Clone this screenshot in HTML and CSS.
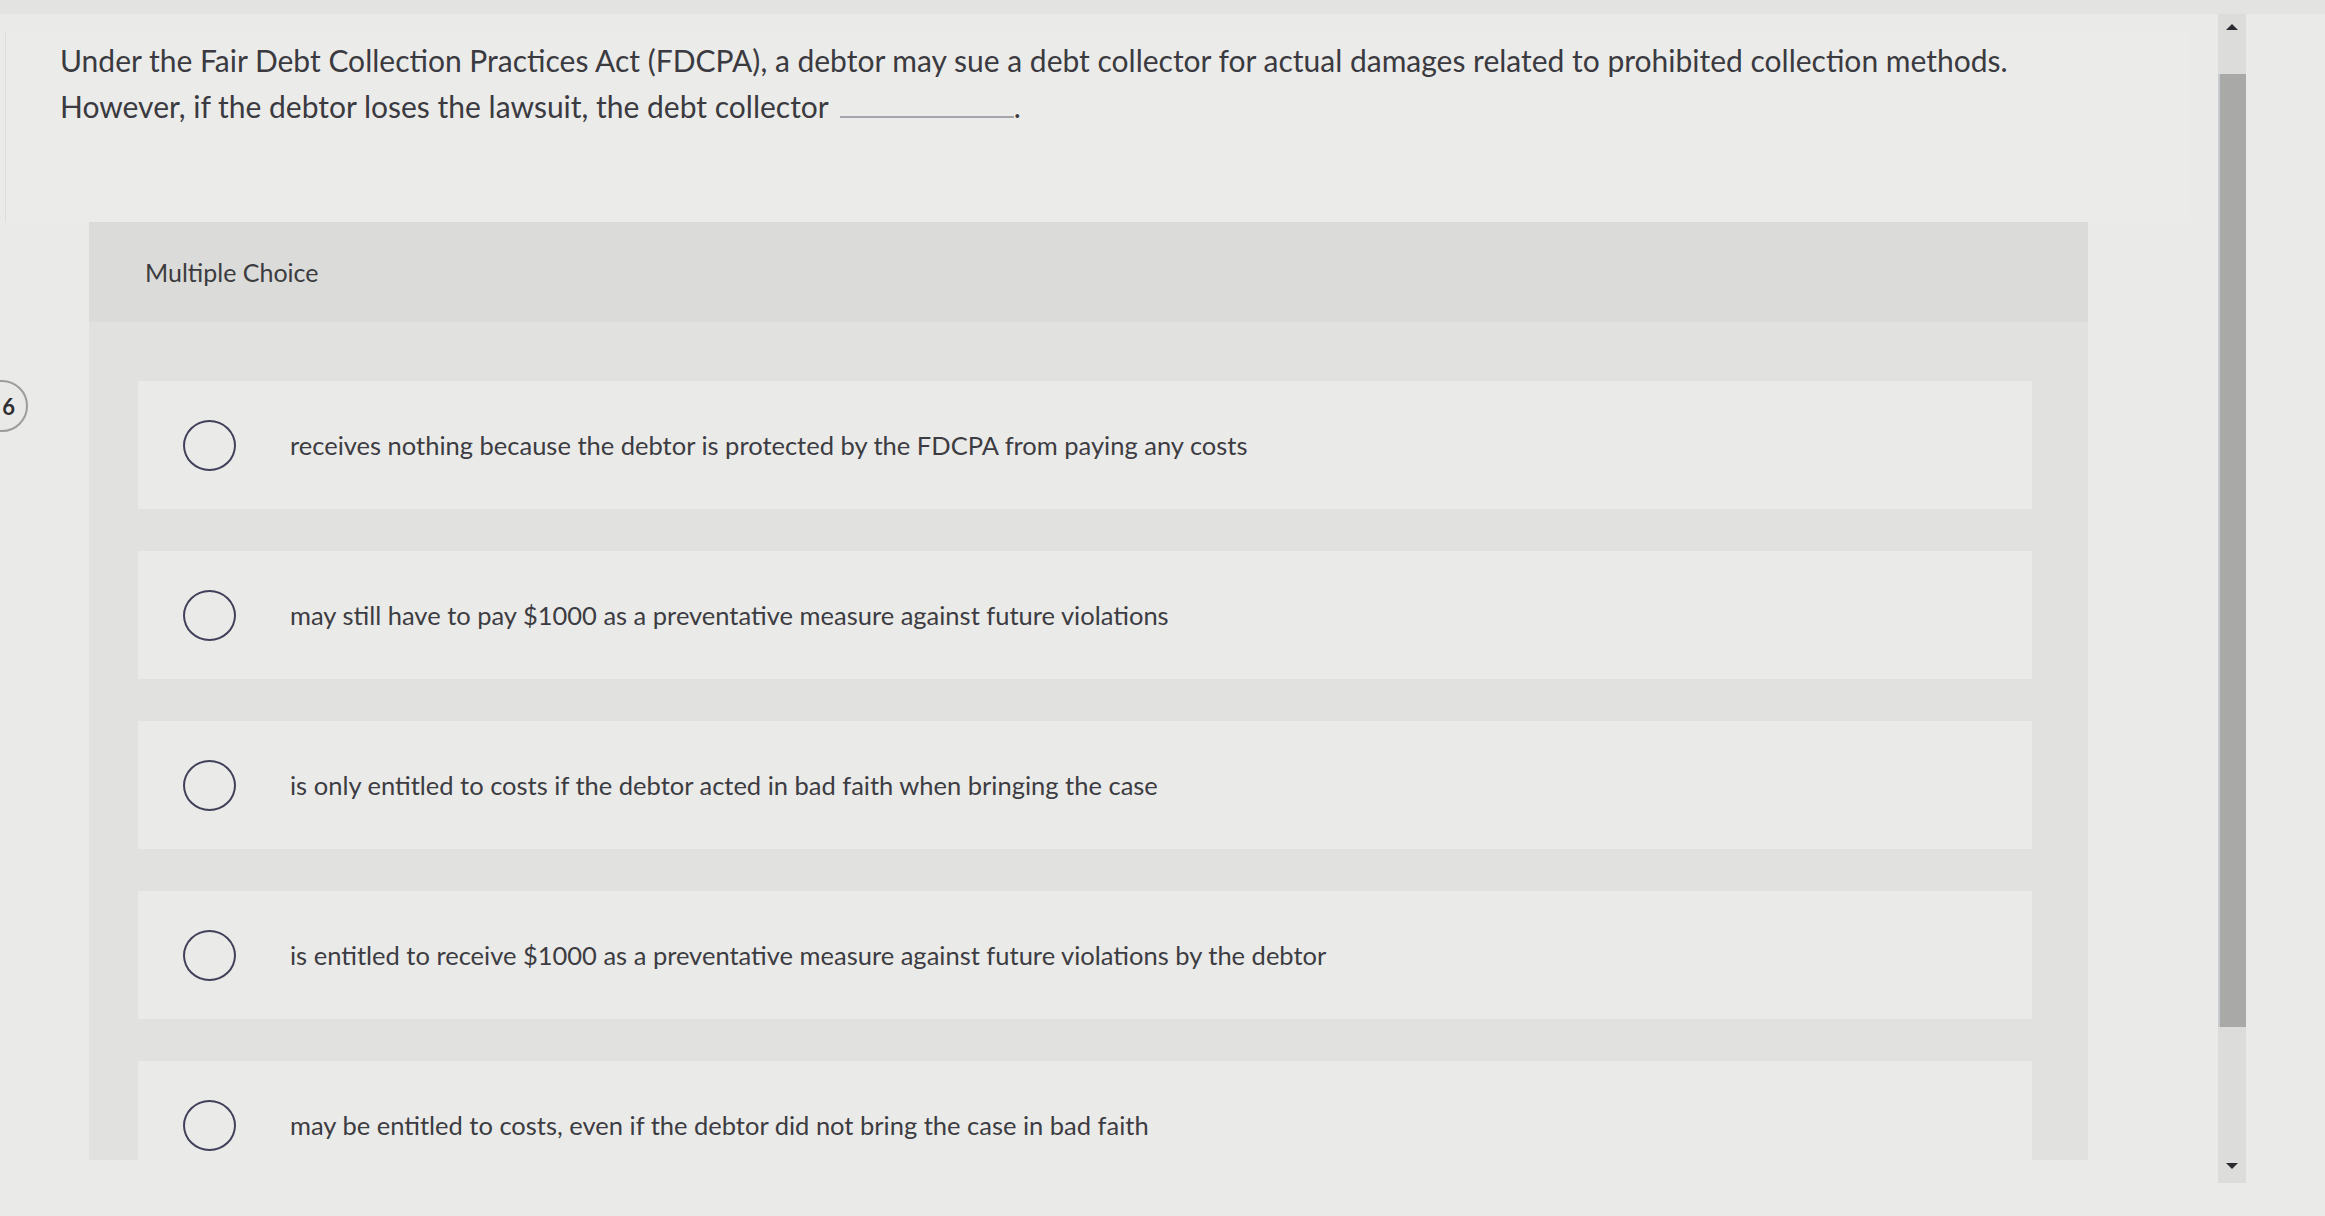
FILE: index.html
```html
<!DOCTYPE html>
<html lang="en">
<head>
  <meta charset="UTF-8">
  <meta name="viewport" content="width=device-width, initial-scale=1.0">
  <title>Multiple Choice</title>
  <link rel="stylesheet" href="styles.css">
</head>
<body>
  <div class="screen">
    <main class="content">
      <section class="question-card">
        <p class="prompt">Under the Fair Debt Collection Practices Act (FDCPA), a debtor may sue a debt collector for actual damages related to prohibited collection methods.<br>However, if the debtor loses the lawsuit, the debt collector <span class="blank"></span>.</p>
      </section>

      <section class="mc">
        <header class="mc-head">Multiple Choice</header>
        <ul class="options">
          <li class="option"><span class="radio"></span><span class="label">receives nothing because the debtor is protected by the FDCPA from paying any costs</span></li>
          <li class="option"><span class="radio"></span><span class="label">may still have to pay $1000 as a preventative measure against future violations</span></li>
          <li class="option"><span class="radio"></span><span class="label">is only entitled to costs if the debtor acted in bad faith when bringing the case</span></li>
          <li class="option"><span class="radio"></span><span class="label">is entitled to receive $1000 as a preventative measure against future violations by the debtor</span></li>
          <li class="option"><span class="radio"></span><span class="label">may be entitled to costs, even if the debtor did not bring the case in bad faith</span></li>
        </ul>
      </section>
    </main>

    <div class="scrollbar">
      <div class="sb-btn sb-up"><span class="arrow-up"></span></div>
      <div class="sb-thumb"></div>
      <div class="sb-btn sb-down"><span class="arrow-down"></span></div>
    </div>
  </div>

  <div class="qnum">6</div>
</body>
</html>
```

FILE: styles.css
```css
html, body {
  margin: 0;
  padding: 0;
}

body {
  background: #eaeae8;
  font-family: Lato, "Liberation Sans", sans-serif;
  color: #3a3a40;
  overflow: hidden;
}

.screen {
  display: flex;
  height: 1216px;
  border-top: 14px solid #e3e3e1;
  box-sizing: border-box;
}

.content {
  flex: 1;
  min-width: 0;
}

/* question text */
.question-card {
  height: 190px;
  margin: 18px 0 0 5px;
  background: #ebebe9;
  border-left: 1px solid #dddddb;
}

.prompt {
  margin: 0;
  padding: 5px 0 0 54px;
  font-size: 30px;
  line-height: 46px;
  white-space: nowrap;
}

.blank {
  display: inline-block;
  width: 174px;
  margin-left: 4px;
  border-bottom: 2px solid #a4a4ac;
  vertical-align: baseline;
}

/* multiple choice panel */
.mc {
  height: 938px;
  margin: 0 102px 0 89px;
  background: #e1e1df;
  overflow: hidden;
}

.mc-head {
  display: flex;
  align-items: center;
  height: 100px;
  padding-left: 56px;
  background: #dbdbd9;
  font-size: 25px;
  color: #3c3c40;
}

.options {
  list-style: none;
  margin: 0;
  padding: 59px 56px 0 49px;
  display: flex;
  flex-direction: column;
  gap: 42px;
}

.option {
  display: flex;
  align-items: center;
  height: 128px;
  flex-shrink: 0;
  padding-left: 45px;
  background: #eaeae8;
}

.radio {
  width: 49px;
  height: 47px;
  border: 2.5px solid #40405a;
  border-radius: 50%;
  flex-shrink: 0;
}

.label {
  margin-left: 54px;
  font-size: 25.5px;
  color: #3c3c42;
}

/* scrollbar */
.scrollbar {
  width: 28px;
  margin: 0 79px 0 28px;
  display: flex;
  flex-direction: column;
}

.sb-btn {
  display: flex;
  justify-content: center;
  background: #dcdcda;
}

.sb-up {
  height: 60px;
  align-items: flex-start;
  padding-top: 10px;
  box-sizing: border-box;
}

.sb-down {
  height: 156px;
  align-items: flex-end;
  padding-bottom: 14px;
  box-sizing: border-box;
}

.sb-thumb {
  height: 953px;
  background: #a9a9a8;
  border-left: 2px solid #c6cbd2;
}

.arrow-up {
  width: 0;
  height: 0;
  border-left: 6px solid transparent;
  border-right: 6px solid transparent;
  border-bottom: 6px solid #2a2a30;
}

.arrow-down {
  width: 0;
  height: 0;
  border-left: 6px solid transparent;
  border-right: 6px solid transparent;
  border-top: 6px solid #2a2a30;
}

/* question number badge, cut by the left edge */
.qnum {
  position: absolute;
  left: -38px;
  top: 380px;
  width: 66px;
  height: 52px;
  box-sizing: border-box;
  padding-right: 11px;
  border: 2px solid #9c9c9a;
  border-radius: 26px;
  background: #e9e9e7;
  display: flex;
  align-items: center;
  justify-content: flex-end;
  font-size: 22px;
  font-weight: 700;
  color: #2e2e32;
}
```
